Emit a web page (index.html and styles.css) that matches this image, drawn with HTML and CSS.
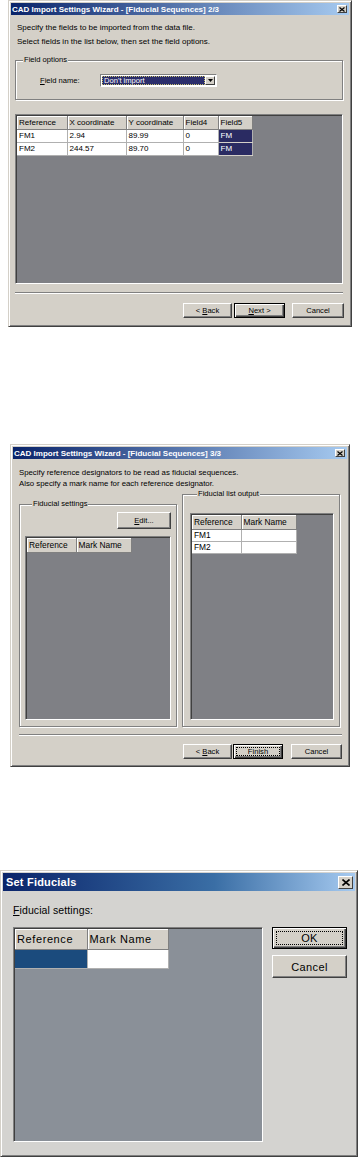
FILE: index.html
```html
<!DOCTYPE html>
<html lang="en">

<head>
  <meta charset="UTF-8">
  <meta name="viewport" content="width=device-width, initial-scale=1.0">
  <title>CAD Import Settings Wizard</title>
  <link rel="stylesheet" href="styles.css">
</head>

<body>
  <div class="page">

    <!-- step 2/3 -->
    <div class="dlg wiz1">
      <div class="titlebar">
        <span>CAD Import Settings Wizard - [Fiducial Sequences] 2/3</span>
        <span class="close"><svg width="6" height="5" viewBox="0 0 6 5"><path d="M0.5 0.5 L5.5 4.5 M5.5 0.5 L0.5 4.5" stroke="#000" stroke-width="1.2"/></svg></span>
      </div>
      <div class="body1">
        <div class="intro">
          <p>Specify the fields to be imported from the data file.</p>
          <p>Select fields in the list below, then set the field options.</p>
        </div>
        <fieldset class="group g-options">
          <legend>Field options</legend>
          <div class="field_row">
            <label><u>F</u>ield name:</label>
            <div class="combo">
              <span class="combo_value">Don't import</span>
              <span class="combo_btn"><svg width="5" height="3" viewBox="0 0 5 3"><path d="M0 0 H5 L2.5 3 Z" fill="#000"/></svg></span>
            </div>
          </div>
        </fieldset>
        <div class="listview lv1">
          <table class="grid grid1">
            <tr>
              <th class="c-ref">Reference</th>
              <th class="c-x">X coordinate</th>
              <th class="c-y">Y coordinate</th>
              <th class="c-f4">Field4</th>
              <th class="c-f5">Field5</th>
            </tr>
            <tr>
              <td>FM1</td><td>2.94</td><td>89.99</td><td>0</td><td class="sel">FM</td>
            </tr>
            <tr>
              <td>FM2</td><td>244.57</td><td>89.70</td><td>0</td><td class="sel">FM</td>
            </tr>
          </table>
        </div>
        <div class="separator"></div>
        <div class="buttons">
          <button class="btn b-back">&lt; <u>B</u>ack</button>
          <button class="btn btn-default b-next"><u>N</u>ext &gt;</button>
          <button class="btn b-cancel">Cancel</button>
        </div>
      </div>
    </div>

    <!-- step 3/3 -->
    <div class="dlg wiz2">
      <div class="titlebar">
        <span>CAD Import Settings Wizard - [Fiducial Sequences] 3/3</span>
        <span class="close"><svg width="6" height="5" viewBox="0 0 6 5"><path d="M0.5 0.5 L5.5 4.5 M5.5 0.5 L0.5 4.5" stroke="#000" stroke-width="1.2"/></svg></span>
      </div>
      <div class="body2">
        <div class="intro2">
          <p>Specify reference designators to be read as fiducial sequences.</p>
          <p>Also specify a mark name for each reference designator.</p>
        </div>
        <div class="halves">
          <fieldset class="group g-settings">
            <legend>Fiducial settings</legend>
            <div class="edit_row">
              <button class="btn b-edit"><u>E</u>dit...</button>
            </div>
            <div class="listview lv2">
              <table class="grid grid2">
                <tr><th class="c-ref2">Reference</th><th class="c-mark2">Mark Name</th></tr>
              </table>
            </div>
          </fieldset>
          <fieldset class="group g-output">
            <legend>Fiducial list output</legend>
            <div class="listview lv3">
              <table class="grid grid2">
                <tr><th class="c-ref2">Reference</th><th class="c-mark2">Mark Name</th></tr>
                <tr><td>FM1</td><td></td></tr>
                <tr><td>FM2</td><td></td></tr>
              </table>
            </div>
          </fieldset>
        </div>
        <div class="separator sep2"></div>
        <div class="buttons buttons2">
          <button class="btn b-back2">&lt; <u>B</u>ack</button>
          <button class="btn btn-default b-finish"><span class="focus">Finish</span></button>
          <button class="btn b-cancel2">Cancel</button>
        </div>
      </div>
    </div>

    <!-- set fiducials -->
    <div class="dlg setfid">
      <div class="titlebar titlebar3">
        <span>Set Fiducials</span>
        <span class="close close3"><svg width="8" height="7" viewBox="0 0 8 7"><path d="M0.5 0.5 L7.5 6.5 M7.5 0.5 L0.5 6.5" stroke="#000" stroke-width="1.6"/></svg></span>
      </div>
      <div class="body3">
        <p class="caption"><u>F</u>iducial settings:</p>
        <div class="fid_row">
          <div class="listview lv4">
            <table class="grid grid3">
              <tr><th class="c-ref3">Reference</th><th class="c-mark3">Mark Name</th></tr>
              <tr><td class="sel3"></td><td></td></tr>
            </table>
          </div>
          <div class="side_buttons">
            <button class="btn btn-default b-ok"><span class="focus">OK</span></button>
            <button class="btn b-cancel3">Cancel</button>
          </div>
        </div>
      </div>
    </div>

  </div>
</body>
</html>
```
FILE: styles.css
```css
* {
  box-sizing: border-box;
}

body {
  margin: 0;
  background: #fff;
  font-family: "Liberation Sans", Arial, sans-serif;
  color: #000;
}

p {
  margin: 0;
}

.page {
  display: flex;
  flex-direction: column;
  align-items: flex-start;
}

/* window frame */
.dlg {
  background: #d4d0c8;
  border: 1px solid;
  border-color: #d4d0c8 #404040 #404040 #d4d0c8;
  box-shadow: inset 1px 1px #fff, inset -1px -1px #808080;
  padding: 2px;
  display: flex;
  flex-direction: column;
}

.wiz1 {
  width: 344px;
  height: 327px;
  margin-left: 8px;
}

.wiz2 {
  width: 340px;
  height: 323px;
  margin: 117px 0 0 10px;
}

.setfid {
  width: 358px;
  height: 287px;
  margin-top: 103px;
  background: #d4d3d0;
}

.titlebar {
  display: flex;
  align-items: center;
  justify-content: space-between;
  height: 12px;
  padding: 0 2px 0 1px;
  background: linear-gradient(to right, #0a246a, #a6caf0);
  color: #fff;
  font-weight: bold;
  font-size: 8px;
  white-space: nowrap;
}

.close {
  display: flex;
  align-items: center;
  justify-content: center;
  width: 10px;
  height: 8px;
  background: #d4d0c8;
  border: 1px solid;
  border-color: #fff #404040 #404040 #fff;
}

.titlebar3 {
  height: 18px;
  padding: 0 2px 0 3px;
  font-size: 11px;
  letter-spacing: 0.2px;
  background: linear-gradient(to right, #0a246a, #3a6ea5 60%, #a6caf0);
}

.close3 {
  width: 15px;
  height: 13px;
}

/* step 2/3 */
.body1 {
  flex: 1;
  display: flex;
  flex-direction: column;
  padding: 6px 5px 0 4px;
  font-size: 7.6px;
}

.intro {
  padding-left: 2px;
  line-height: 14px;
  font-size: 8px;
}

.group {
  margin: 0;
  padding: 0;
  min-width: 0;
  border: 1px solid #808080;
  box-shadow: inset 1px 1px #fff, 1px 1px #fff;
}

.group legend {
  margin-left: 7px;
  padding: 0 1px;
  line-height: 10px;
  background: #d4d0c8;
}

.g-options {
  margin-top: 6px;
  margin-right: 1px;
}

.field_row {
  display: flex;
  align-items: center;
  padding: 9px 0 12px 24px;
}

.field_row label {
  width: 60px;
}

.combo {
  display: flex;
  width: 117px;
  height: 13px;
  border: 1px solid;
  border-color: #808080 #fff #fff #808080;
  background: #fff;
  padding: 1px;
}

.combo_value {
  flex: 1;
  background: #2b2d6b;
  color: #fff;
  outline: 1px dotted #c8c070;
  outline-offset: -1px;
  padding-left: 2px;
  line-height: 9px;
}

.combo_btn {
  width: 10px;
  display: flex;
  align-items: center;
  justify-content: center;
  background: #d4d0c8;
  border: 1px solid;
  border-color: #fff #404040 #404040 #fff;
}

.listview {
  background: #7f8085;
  border: 1px solid;
  border-color: #808080 #fff #fff #808080;
  box-shadow: inset 1px 1px #404040;
  padding: 1px 0 0 1px;
}

.lv1 {
  margin: 14px 1px 0 0;
  height: 170px;
}

.grid {
  border-collapse: collapse;
  border-right: 1px solid #303030;
  border-bottom: 1px solid #303030;
  font-size: 8px;
}

.grid th {
  background: #d4d0c8;
  font-weight: normal;
  text-align: left;
  border-right: 1px solid #808080;
  border-bottom: 1px solid #808080;
  box-shadow: inset 1px 1px #fff;
  padding: 0 2px;
  white-space: nowrap;
}

.grid td {
  background: #fff;
  border-right: 1px solid #b0b0b0;
  border-bottom: 1px solid #b0b0b0;
  padding: 0 2px;
  white-space: nowrap;
}

.grid1 tr {
  height: 13px;
}

.grid1 .c-ref { width: 50px; }
.grid1 .c-x { width: 59px; }
.grid1 .c-y { width: 57px; }
.grid1 .c-f4 { width: 35px; }
.grid1 .c-f5 { width: 34px; }

.grid td.sel {
  background: #2a2b62;
  color: #fff;
  border-bottom-color: #d4d0c8;
}

.separator {
  height: 2px;
  border-top: 1px solid #808080;
  border-bottom: 1px solid #fff;
  margin: 8px 1px 0 0;
}

.buttons {
  display: flex;
  justify-content: flex-end;
  margin-top: 9px;
}

.btn {
  font-family: inherit;
  font-size: 7.6px;
  height: 15px;
  padding: 0;
  background: #d4d0c8;
  color: #000;
  border: 1px solid;
  border-color: #fff #404040 #404040 #fff;
  box-shadow: inset -1px -1px #808080;
}

.btn-default {
  border: 1px solid #000;
  box-shadow: inset 1px 1px #fff, inset -1px -1px #404040, inset -2px -2px #808080;
}

.b-back { width: 49px; }
.b-next { width: 51px; margin-left: 2px; }
.b-cancel { width: 52px; margin-left: 7px; }

/* step 3/3 */
.body2 {
  flex: 1;
  display: flex;
  flex-direction: column;
  padding: 8px 5px 0 6px;
  font-size: 8px;
}

.intro2 {
  line-height: 11px;
  font-size: 7.8px;
}

.halves {
  display: flex;
  gap: 5px;
  height: 238px;
}

.halves .group {
  width: 158px;
  display: flex;
  flex-direction: column;
}

.halves .group legend {
  font-size: 7.6px;
}

.g-settings {
  margin-top: 10px;
  padding: 0 5px 6px 5px;
}

.g-output {
  padding: 0 5px 6px 7px;
}

.edit_row {
  display: flex;
  justify-content: flex-end;
  margin-top: 3px;
}

.b-edit {
  width: 54px;
  height: 17px;
}

.lv2 {
  flex: 1;
  margin-top: 7px;
}

.lv3 {
  flex: 1;
  margin-top: 14px;
}

.grid2 {
  font-size: 8.4px;
}

.grid2 tr {
  height: 12px;
}

.grid2 tr:first-child {
  height: 14px;
}

.grid2 .c-ref2 { width: 49px; }
.grid2 .c-mark2 { width: 55px; }

.sep2 {
  margin: 7px 0 0 0;
}

.buttons2 {
  margin-top: 8px;
}

.b-back2 { width: 49px; }
.b-finish { width: 50px; margin-left: 1px; padding: 2px; }
.b-cancel2 { width: 51px; margin-left: 8px; }

.focus {
  display: flex;
  align-items: center;
  justify-content: center;
  height: 100%;
  border: 1px dotted #000;
}

/* set fiducials */
.body3 {
  flex: 1;
  display: flex;
  flex-direction: column;
  padding: 12px 8px 12px 10px;
  font-size: 10.5px;
}

.caption {
  line-height: 14px;
  letter-spacing: 0.1px;
}

.fid_row {
  flex: 1;
  display: flex;
  gap: 9px;
  margin-top: 10px;
}

.lv4 {
  width: 250px;
  background: #8a9098;
}

.grid3 {
  font-size: 11px;
  letter-spacing: 0.6px;
}

.grid3 tr {
  height: 19px;
}

.grid3 tr:first-child {
  height: 20px;
}

.grid3 .c-ref3 { width: 72px; }
.grid3 .c-mark3 { width: 81px; }

.grid3 td.sel3 {
  background: #1b4b7d;
}

.side_buttons {
  display: flex;
  flex-direction: column;
  gap: 6px;
}

.side_buttons .btn {
  width: 75px;
  font-size: 11px;
  letter-spacing: 0.4px;
}

.b-ok {
  height: 22px;
  padding: 3px;
}

.b-cancel3 {
  height: 23px;
}
```
